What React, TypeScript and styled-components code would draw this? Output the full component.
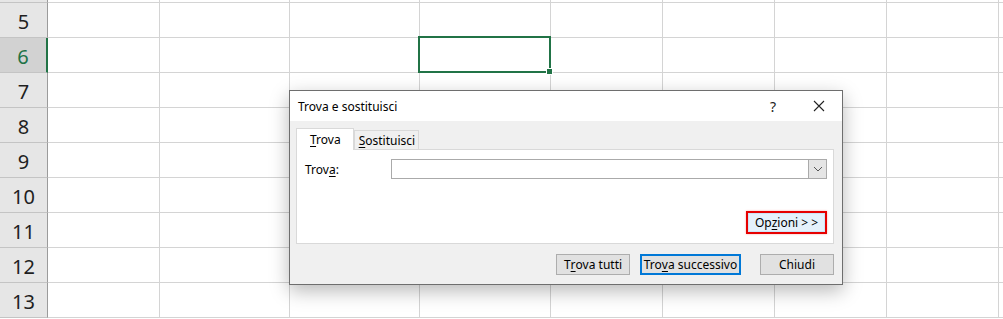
import React from "react";
import styled, { createGlobalStyle } from "styled-components";

const GlobalStyle = createGlobalStyle`
  html, body {
    margin: 0;
    padding: 0;
    background: #ffffff;
    overflow: hidden;
  }
  body {
    font-family: "Noto Sans", "Open Sans", Arial, sans-serif;
  }
`;

const Page = styled.div`
  position: relative;
  width: 1003px;
  height: 319px;
  overflow: hidden;
`;

const Sheet = styled.div`
  margin-top: -32px;
  display: flex;
  flex-direction: column;
`;

const Row = styled.div`
  display: flex;
  height: 35px;
`;

const RowHeader = styled.div<{ $active?: boolean }>`
  box-sizing: border-box;
  flex: 0 0 48px;
  display: flex;
  align-items: center;
  justify-content: center;
  padding-top: 2px;
  background: ${p => (p.$active ? "#d2d2d2" : "#e6e6e6")};
  border-bottom: 1px solid #c4c4c4;
  border-right: ${p => (p.$active ? "2px solid #217346" : "1px solid #9b9b9b")};
  color: ${p => (p.$active ? "#217346" : "#1f1f1f")};
  font-size: 20px;
  font-family: "Noto Sans", "Open Sans", sans-serif;
`;

const Cell = styled.div<{ $w: number }>`
  box-sizing: border-box;
  flex: 0 0 ${p => p.$w}px;
  border-right: 1px solid #d4d4d4;
  border-bottom: 1px solid #d4d4d4;
`;

const Selection = styled.div`
  position: absolute;
  left: 418px;
  top: 36px;
  width: 133px;
  height: 37px;
  box-sizing: border-box;
  border: 2px solid #217346;
  &::after {
    content: "";
    position: absolute;
    right: -4px;
    bottom: -4px;
    width: 5px;
    height: 5px;
    background: #217346;
    border: 1px solid #fff;
  }
`;

const Dialog = styled.div`
  position: absolute;
  left: 289px;
  top: 90px;
  width: 554px;
  height: 195px;
  box-sizing: border-box;
  border: 1px solid #6e6e6e;
  background: #f0f0f0;
  box-shadow: 0 6px 18px rgba(0, 0, 0, 0.28);
  display: flex;
  flex-direction: column;
  font-size: 12px;
  color: #000;
`;

const TitleBar = styled.div`
  height: 30px;
  background: #ffffff;
  display: flex;
  align-items: center;
  padding-left: 8px;
  flex: 0 0 auto;
`;

const Title = styled.div`
  flex: 1;
  font-size: 12px;
`;

const TitleButton = styled.div`
  width: 46px;
  display: flex;
  align-items: center;
  justify-content: center;
  font-size: 14px;
  color: #222;
`;

const Body = styled.div`
  flex: 1;
  padding: 7px 8px 0 6px;
  display: flex;
  flex-direction: column;
`;

const Tabs = styled.div`
  display: flex;
  align-items: flex-end;
  height: 21px;
`;

const Tab = styled.div<{ $active?: boolean }>`
  box-sizing: border-box;
  height: ${p => (p.$active ? "22px" : "19px")};
  padding: ${p => (p.$active ? "2px 12px 0 13px" : "1px 3px 0 4px")};
  background: ${p => (p.$active ? "#ffffff" : "#f0f0f0")};
  border: 1px solid #d9d9d9;
  border-bottom: none;
  margin-bottom: ${p => (p.$active ? "-1px" : "0")};
  position: relative;
  z-index: ${p => (p.$active ? 1 : 0)};
  font-size: 12px;
`;

const Panel = styled.div`
  box-sizing: border-box;
  width: 538px;
  height: 95px;
  background: #fff;
  border: 1px solid #d9d9d9;
  padding: 9px 6px 0 8px;
  display: flex;
  flex-direction: column;
`;

const FieldRow = styled.div`
  display: flex;
  align-items: center;
`;

const Label = styled.div`
  width: 86px;
  font-size: 12px;
`;

const Combo = styled.div`
  box-sizing: border-box;
  width: 436px;
  height: 20px;
  border: 1px solid #aaaaaa;
  display: flex;
  justify-content: flex-end;
`;

const ComboArrow = styled.div`
  width: 17px;
  height: 18px;
  background: #e5e5e5;
  border-left: 1px solid #aaaaaa;
  display: flex;
  align-items: center;
  justify-content: center;
`;

const OptionsRow = styled.div`
  margin-top: 32px;
  display: flex;
  justify-content: flex-end;
`;

const Highlight = styled.div`
  border: 2px solid #e60000;
  box-shadow: 0 0 2px rgba(255, 0, 0, 0.35);
  display: flex;
`;

const Button = styled.div<{ $w: number; $variant?: "default" | "hot"; $gapLeft?: number }>`
  box-sizing: border-box;
  width: ${p => p.$w}px;
  height: ${p => (p.$variant === "hot" ? "19px" : "21px")};
  margin-left: ${p => p.$gapLeft ?? 0}px;
  display: flex;
  align-items: center;
  justify-content: center;
  font-size: 12px;
  white-space: nowrap;
  background: ${p => (p.$variant === "hot" ? "#e5f1fb" : "#e1e1e1")};
  border: ${p =>
    p.$variant === "default"
      ? "2px solid #0078d7"
      : p.$variant === "hot"
      ? "1px solid #cce4f7"
      : "1px solid #adadad"};
`;

const Footer = styled.div`
  display: flex;
  justify-content: flex-end;
  align-items: center;
  gap: 10px;
  margin-top: 10px;
`;

const U = styled.span`
  text-decoration: underline;
  text-underline-offset: 2px;
`;

const colWidths = [112, 130, 130, 131, 112, 112, 112, 112, 40];
const rows = [4, 5, 6, 7, 8, 9, 10, 11, 12, 13];

export default function App() {
  return (
    <Page>
      <GlobalStyle />
      <Sheet>
        {rows.map(r => (
          <Row key={r}>
            <RowHeader $active={r === 6}>{r === 4 ? "" : r}</RowHeader>
            {colWidths.map((w, i) => (
              <Cell key={i} $w={w} />
            ))}
          </Row>
        ))}
      </Sheet>
      <Selection />
      <Dialog>
        <TitleBar>
          <Title>Trova e sostituisci</Title>
          <TitleButton>?</TitleButton>
          <TitleButton>
            <svg width="12" height="12" viewBox="0 0 12 12">
              <path d="M1 1L11 11M11 1L1 11" stroke="#222" strokeWidth="1.1" />
            </svg>
          </TitleButton>
        </TitleBar>
        <Body>
          <Tabs>
            <Tab $active>
              <U>T</U>rova
            </Tab>
            <Tab>
              <U>S</U>ostituisci
            </Tab>
          </Tabs>
          <Panel>
            <FieldRow>
              <Label>
                Trov<U>a</U>:
              </Label>
              <Combo>
                <ComboArrow>
                  <svg width="10" height="6" viewBox="0 0 10 6">
                    <path d="M1 1L5 5L9 1" stroke="#555" strokeWidth="1" fill="none" />
                  </svg>
                </ComboArrow>
              </Combo>
            </FieldRow>
            <OptionsRow>
              <Highlight>
                <Button $w={77} $variant="hot">
                  Op<U>z</U>ioni &gt; &gt;
                </Button>
              </Highlight>
            </OptionsRow>
          </Panel>
          <Footer>
            <Button $w={74}>
              T<U>r</U>ova tutti
            </Button>
            <Button $w={101} $variant="default">
              Tro<U>v</U>a successivo
            </Button>
            <Button $w={74} $gapLeft={9}>
              Chiudi
            </Button>
          </Footer>
        </Body>
      </Dialog>
    </Page>
  );
}
